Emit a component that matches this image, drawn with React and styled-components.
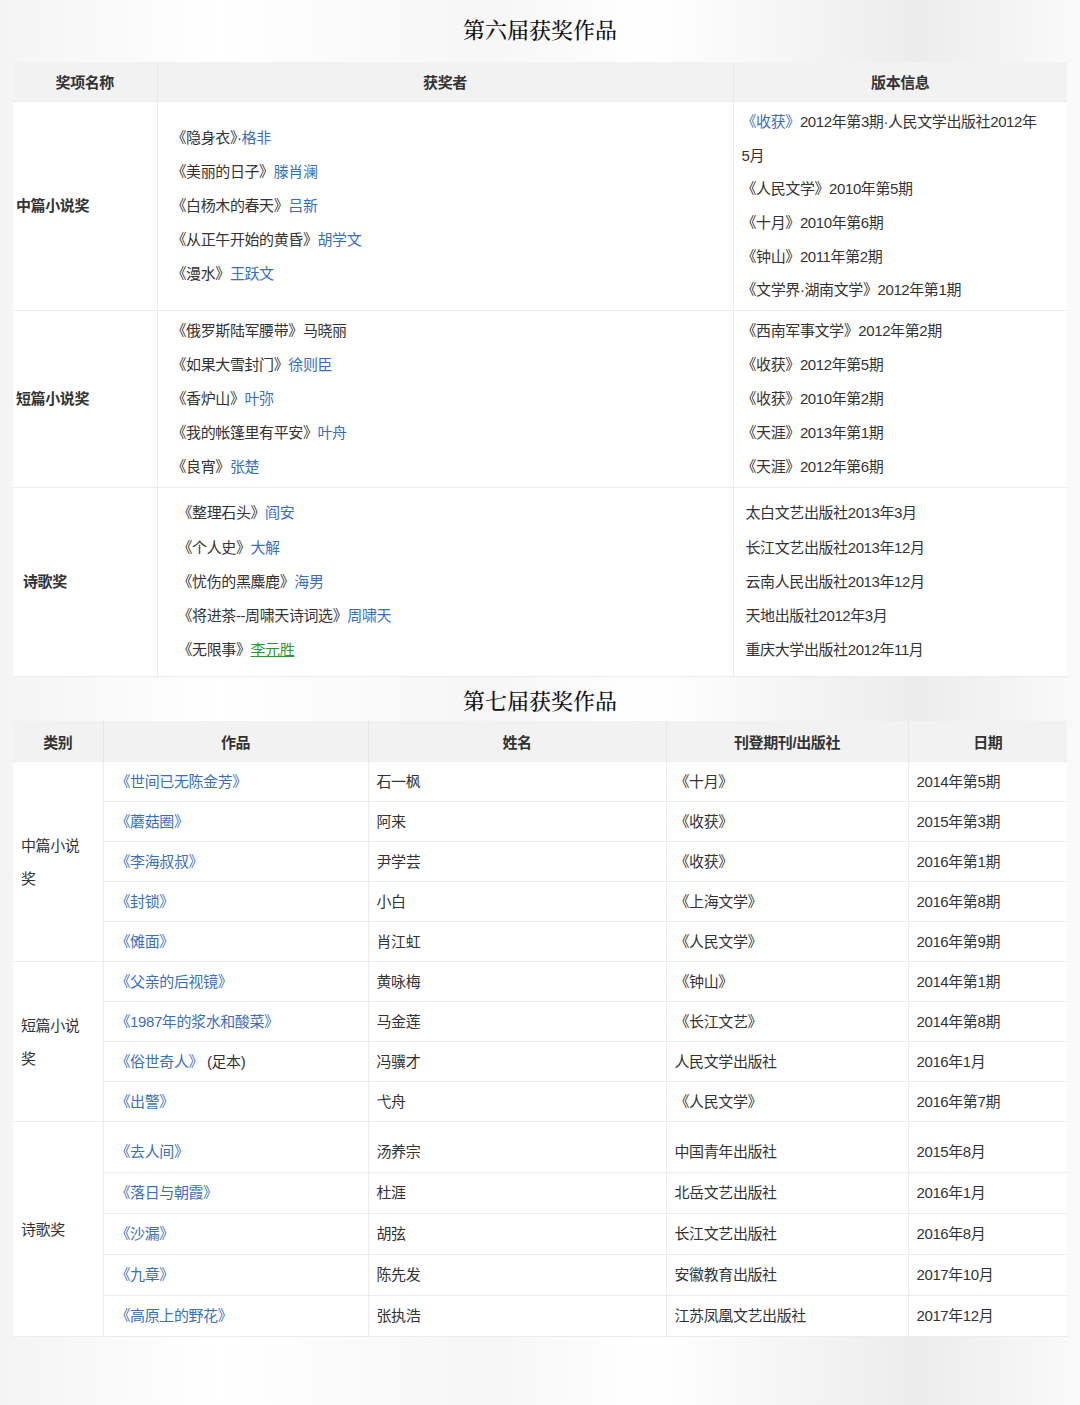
import React from "react";
import styled, { createGlobalStyle } from "styled-components";

const G = createGlobalStyle`
  body{margin:0;background:#fff;font-family:"Liberation Sans","Noto Sans CJK SC",sans-serif;color:#333;}
`;
const Page = styled.div`
  width:1080px;height:1405px;overflow:hidden;
  background:linear-gradient(90deg,#f4f4f4 0%,#fff 20%,#f6f6f6 45%,#fff 60%,#ececec 85%,#fafafa 100%);
  display:flex;flex-direction:column;align-items:center;
`;
const Title = styled.div`
  height:${p=>p.h}px;width:100%;display:flex;align-items:center;justify-content:center;
  padding-bottom:${p=>p.pb||0}px;box-sizing:border-box;
  font-family:"Noto Serif CJK SC","Noto Sans CJK SC",serif;font-size:22px;color:#111;font-weight:500;
`;
const Table = styled.table`
  width:${p=>p.w}px;border-collapse:collapse;background:#fff;table-layout:fixed;font-size:15px;letter-spacing:-0.4px;
`;
const Th = styled.th`
  background:#f2f2f2;height:${p=>p.h}px;padding:0;font-weight:bold;font-size:15px;color:#333;border-right:1px solid #e6e6e6;
  &:last-child{border-right:none;}
`;
const Td = styled.td`
  border:1px solid #ececec;
  padding:0 ${p=>p.px??8}px;vertical-align:middle;height:${p=>p.h?p.h+"px":"auto"};
  font-weight:${p=>p.bold?"bold":"normal"};line-height:${p=>p.lh||20}px;white-space:nowrap;
  &:first-child{border-left:none;}&:last-child{border-right:none;}
`;
const L = styled.div`line-height:${p=>p.lh}px;white-space:nowrap;`;
const A = styled.span`color:${p=>p.green?"#2a9a2a":"#3a6fc0"};text-decoration:${p=>p.green?"underline":"none"};`;

const t1 = [
  {k:"中篇小说奖",h:208,pad:1,items:[["《隐身衣》·","格非"],["《美丽的日子》","滕肖澜"],["《白杨木的春天》","吕新"],["《从正午开始的黄昏》","胡学文"],["《漫水》","王跃文"]],
   info:[[<><A>《收获》</A>2012年第3期·人民文学出版社2012年</>],["5月"],["《人民文学》2010年第5期"],["《十月》2010年第6期"],["《钟山》2011年第2期"],["《文学界·湖南文学》2012年第1期"]]},
  {k:"短篇小说奖",h:176,items:[["《俄罗斯陆军腰带》马晓丽",""],["《如果大雪封门》","徐则臣"],["《香炉山》","叶弥"],["《我的帐篷里有平安》","叶舟"],["《良宵》","张楚"]],
   info:[["《西南军事文学》2012年第2期"],["《收获》2012年第5期"],["《收获》2010年第2期"],["《天涯》2013年第1期"],["《天涯》2012年第6期"]]},
];
const poem = [["《整理石头》","阎安"],["《个人史》","大解"],["《忧伤的黑麋鹿》","海男"],["《将进茶--周啸天诗词选》","周啸天"],["《无限事》","李元胜",true]];
const poemInfo=["太白文艺出版社2013年3月","长江文艺出版社2013年12月","云南人民出版社2013年12月","天地出版社2012年3月","重庆大学出版社2012年11月"];

const t2 = [
  {k:"中篇小说\n奖",rows:[["《世间已无陈金芳》","石一枫","《十月》","2014年第5期"],["《蘑菇圈》","阿来","《收获》","2015年第3期"],["《李海叔叔》","尹学芸","《收获》","2016年第1期"],["《封锁》","小白","《上海文学》","2016年第8期"],["《傩面》","肖江虹","《人民文学》","2016年第9期"]],h:39},
  {k:"短篇小说\n奖",rows:[["《父亲的后视镜》","黄咏梅","《钟山》","2014年第1期"],["《1987年的浆水和酸菜》","马金莲","《长江文艺》","2014年第8期"],["《俗世奇人》","冯骥才","人民文学出版社","2016年1月","(足本)"],["《出警》","弋舟","《人民文学》","2016年第7期"]],h:39},
  {k:"诗歌奖",rows:[["《去人间》","汤养宗","中国青年出版社","2015年8月"],["《落日与朝霞》","杜涯","北岳文艺出版社","2016年1月"],["《沙漏》","胡弦","长江文艺出版社","2016年8月"],["《九章》","陈先发","安徽教育出版社","2017年10月"],["《高原上的野花》","张执浩","江苏凤凰文艺出版社","2017年12月"]],h:40,first:40},
];

export default function App(){
  return <Page><G/>
    <Title h={62} pb={6}>第六届获奖作品</Title>
    <Table w={1054}>
      <colgroup><col width="144"/><col width="576"/><col width="334"/></colgroup>
      <thead><tr><Th h={39}>奖项名称</Th><Th>获奖者</Th><Th>版本信息</Th></tr></thead>
      <tbody>
        {t1.map(r=><tr key={r.k}>
          <Td h={r.h} bold px={3}>{r.k}</Td>
          <Td px={14}>{r.items.map((it,i)=><L lh={34} key={i}>{it[0]}<A>{it[1]}</A></L>)}</Td>
          <Td px={8}>{r.info.map((it,i)=><L lh={r.pad?33.6:34} key={i}>{it[0]}</L>)}</Td>
        </tr>)}
        <tr><Td h={188} bold px={10}>诗歌奖</Td>
          <Td px={20}>{poem.map((p,i)=><L lh={34.3} key={i}>{p[0]}<A green={p[2]}>{p[1]}</A></L>)}</Td>
          <Td px={12}>{poemInfo.map((p,i)=><L lh={34.3} key={i}>{p}</L>)}</Td>
        </tr>
      </tbody>
    </Table>
    <Title h={44}>第七届获奖作品</Title>
    <Table w={1054}>
      <colgroup><col width="90"/><col width="265"/><col width="298"/><col width="242"/><col width="159"/></colgroup>
      <thead><tr><Th h={40}>类别</Th><Th>作品</Th><Th>姓名</Th><Th>刊登期刊/出版社</Th><Th>日期</Th></tr></thead>
      <tbody>
        {t2.map(g=>g.rows.map((r,i)=>{
          const st = g.first&&i===0?{paddingTop:10}:undefined;
          return <tr key={g.k+i}>
          {i===0&&<Td rowSpan={g.rows.length} px={8} lh={33}>{g.k.split("\n").map((s,j)=><div key={j}>{s}</div>)}</Td>}
          <Td h={g.h} px={12} style={st}><A>{r[0]}</A>{r[4]?" "+r[4]:""}</Td>
          <Td px={8} style={st}>{r[1]}</Td>
          <Td px={8} style={st}>{r[2]}</Td>
          <Td px={8} style={st}>{r[3]}</Td>
        </tr>;}))}
      </tbody>
    </Table>
  </Page>;
}
